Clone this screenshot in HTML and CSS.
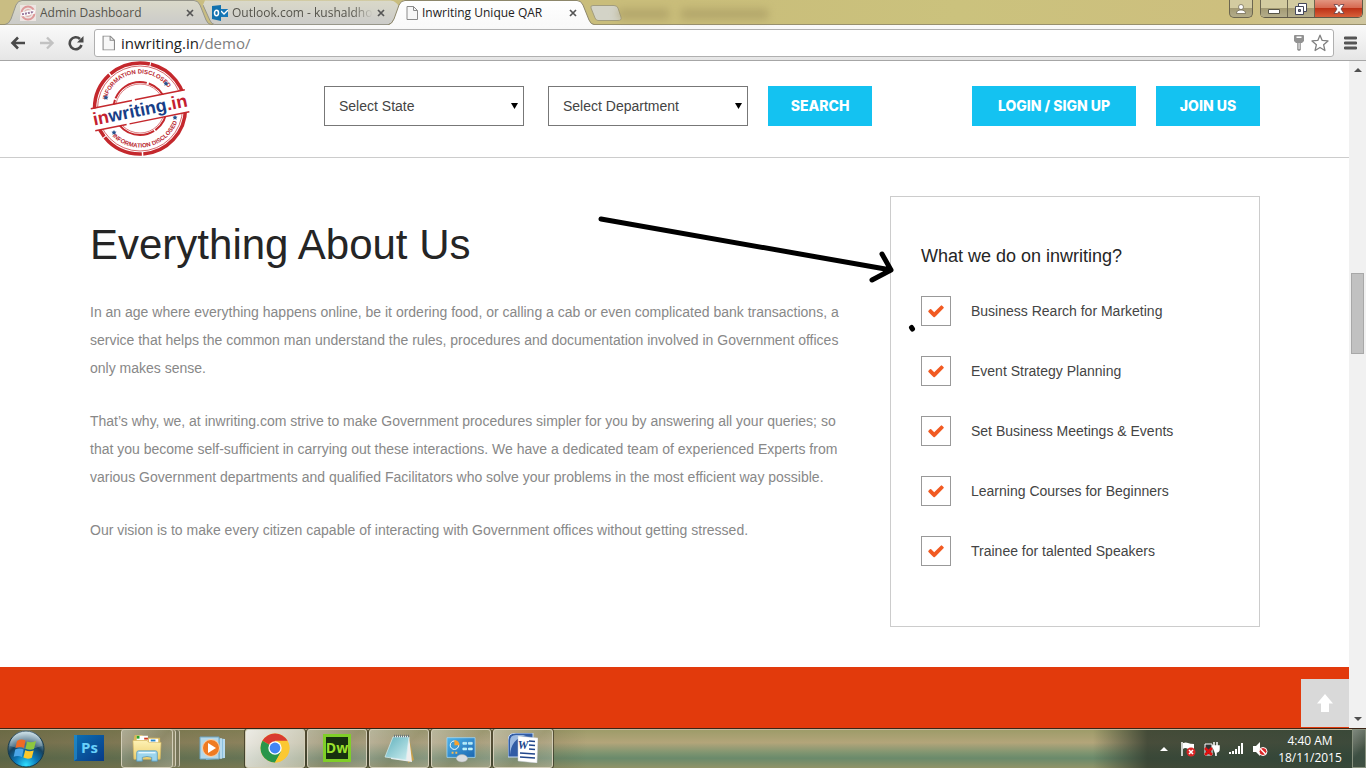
FILE: index.html
```html
<!DOCTYPE html>
<html lang="en">
<head>
<meta charset="utf-8">
<title>Inwriting Unique QAR</title>
<link rel="stylesheet" href="styles.css">
</head>
<body>
<svg class="defs" aria-hidden="true">
  <defs>
    <linearGradient id="g-tab" x1="0" y1="0" x2="0" y2="1"><stop offset="0" stop-color="#dad9c9"/><stop offset="1" stop-color="#cbcbc9"/></linearGradient>
    <linearGradient id="g-active" x1="0" y1="0" x2="0" y2="1"><stop offset="0" stop-color="#fff"/><stop offset="1" stop-color="#f9f9f9"/></linearGradient>
    <radialGradient id="g-orb" cx=".5" cy=".95" r=".9"><stop offset="0" stop-color="#2ee0ff"/><stop offset=".35" stop-color="#0b78b8"/><stop offset=".65" stop-color="#16425f"/><stop offset="1" stop-color="#b5d0da"/></radialGradient>
    <linearGradient id="g-ps" x1="0" y1="0" x2="1" y2="1"><stop offset="0" stop-color="#0b70b4"/><stop offset="1" stop-color="#073a87"/></linearGradient>
    <linearGradient id="g-folder" x1="0" y1="0" x2="0" y2="1"><stop offset="0" stop-color="#fdf1b4"/><stop offset="1" stop-color="#edcf6d"/></linearGradient>
    <linearGradient id="g-note" x1="0" y1="0" x2="1" y2="1"><stop offset="0" stop-color="#5fb0bc"/><stop offset="1" stop-color="#cdeef0"/></linearGradient>
    <linearGradient id="g-panel" x1="0" y1="0" x2="1" y2="1"><stop offset="0" stop-color="#4fb4ea"/><stop offset="1" stop-color="#1a66b0"/></linearGradient>
    <symbol id="page" viewBox="0 0 12 14"><path d="M1 .5h6.5l4 4v9H1z" fill="#f7f7f7" stroke="#8a8a8a"/><path d="M7.5.5v4h4" fill="none" stroke="#8a8a8a"/></symbol>
    <symbol id="close" viewBox="0 0 8 8"><path d="M1 1l6 6M7 1L1 7" stroke="#555" stroke-width="1.7"/></symbol>
    <symbol id="check" viewBox="0 0 1792 1792"><path fill="#f15a22" d="M1671 566q0 40-28 68l-724 724-136 136q-28 28-68 28t-68-28l-136-136-362-362q-28-28-28-68t28-68l136-136q28-28 68-28t68 28l294 295 656-657q28-28 68-28t68 28l136 136q28 28 28 68z"/></symbol>
  </defs>
</svg>

<div class="tabstrip">
  <div class="tab tab-first">
    <svg class="tab-shape" viewBox="0 0 206 25" preserveAspectRatio="none"><path d="M0 24.500Q4 24 6 19L11 5Q13 .5 17 .5H189Q193 .5 195 5L201 20Q203 24.500 206 24.500" fill="url(#g-tab)" stroke="#96958a"/></svg>
    <svg class="tab-icon" viewBox="0 0 16 16"><path d="M0 0h16v16H0z" fill="#ece5e2"/><circle cx="8" cy="8" r="6.500" fill="none" stroke="#d99" stroke-width="2"/><circle cx="8" cy="8" r="3.500" fill="none" stroke="#daa"/><path d="M1 9.500l14-3" stroke="#fff" stroke-width="4"/><path d="M2 9.300l12-2.500" stroke="#98779b" stroke-width="2" stroke-dasharray="2 1"/></svg>
    <span class="tab-title">Admin Dashboard</span>
    <button class="tab-close" aria-label="Close tab"><svg viewBox="0 0 8 8"><use href="#close"/></svg></button>
  </div>
  <div class="tab tab-second">
    <svg class="tab-shape" viewBox="0 0 206 25" preserveAspectRatio="none"><path d="M0 5L7 20Q9 24.500 12 24.500H192Q196 24 198 19L203 6L200 3Q198 .5 194 .5H2Z" fill="url(#g-tab)"/><path d="M0 5L7 20Q9 24.500 12 24.500H192Q196 24 198 19" fill="none" stroke="#96958a"/></svg>
    <svg class="tab-icon" viewBox="0 0 16 16"><path d="M8 4h8v8H8z" fill="#1677b7"/><path d="M9 6l3 3 4-4" fill="none" stroke="#fff" stroke-width="1.300"/><path d="M0 1l9-1v16l-9-2z" fill="#1272ae"/><ellipse cx="4.500" cy="8" rx="2" ry="2.700" fill="none" stroke="#fff" stroke-width="1.500"/></svg>
    <span class="tab-title tab-fade">Outlook.com - kushaldhol</span>
    <button class="tab-close" aria-label="Close tab"><svg viewBox="0 0 8 8"><use href="#close"/></svg></button>
  </div>
  <div class="tab tab-active">
    <svg class="tab-shape" viewBox="0 0 206 25" preserveAspectRatio="none"><path d="M0 25Q4 24 6 19L11 5Q13 .5 17 .5H189Q193 .5 195 5L201 20Q203 24.500 206 24.500V25Z" fill="url(#g-active)"/><path d="M0 25Q4 24 6 19L11 5Q13 .5 17 .5H189Q193 .5 195 5L201 20Q203 24.500 206 24.500" fill="none" stroke="#8d876b"/></svg>
    <svg class="tab-icon tab-page" viewBox="0 0 12 14"><use href="#page"/></svg>
    <span class="tab-title">Inwriting Unique QAR</span>
    <button class="tab-close" aria-label="Close tab"><svg viewBox="0 0 8 8"><use href="#close"/></svg></button>
  </div>
  <button class="new-tab" aria-label="New tab"><svg viewBox="0 0 32 16"><path d="M3 .5H24Q27 .5 28 3L31 12Q32 15.500 28 15.500H8Q6 15.500 5 13L1 3Q0 .5 3 .5Z" fill="#d3d3c7" stroke="#a29d7e"/></svg></button>
  <div class="background-title"></div>
  <div class="window-controls">
    <button class="wc wc-user" aria-label="User"><svg viewBox="0 0 12 12"><circle cx="6" cy="4" r="2.500" fill="#fff" stroke="#665f47" stroke-width=".7"/><path d="M1.500 10.500Q1.500 7 6 7t4.500 3.500z" fill="#fff" stroke="#665f47" stroke-width=".7"/></svg></button>
    <div class="wc-group">
      <button class="wc" aria-label="Minimize"><svg viewBox="0 0 12 12"><path d="M.5 6.500h11v4H.5z" fill="#fff" stroke="#565448"/></svg></button>
      <button class="wc" aria-label="Restore"><svg viewBox="0 0 12 12"><path d="M3.500.5h8v8h-8z" fill="#fff" stroke="#44475a"/><path d="M.5 3.500h8v8h-8z" fill="#fff" stroke="#44475a"/><path d="M3.500 6.500h2v2h-2z" fill="#888" stroke="#44475a"/></svg></button>
      <button class="wc wc-close" aria-label="Close"><svg viewBox="0 0 12 12"><path d="M1 1.500h3.500L6 3.500l1.500-2H11L8 6l3 4.500H7.500L6 8.500l-1.500 2H1L4 6z" fill="#fff" stroke="#663c45" stroke-width=".8"/></svg></button>
    </div>
  </div>
</div>

<div class="toolbar">
  <button class="nav" aria-label="Back"><svg viewBox="0 0 16 16"><path d="M15 8H3M8 2.500L2.500 8 8 13.500" fill="none" stroke="#4a4a4a" stroke-width="2.600"/></svg></button>
  <button class="nav" aria-label="Forward"><svg viewBox="0 0 16 16"><path d="M1 8h12M8 2.500L13.500 8 8 13.500" fill="none" stroke="#c2c2c2" stroke-width="2.400"/></svg></button>
  <button class="nav" aria-label="Reload"><svg viewBox="0 0 16 16"><path d="M13.500 10A6 6 0 1 1 12 4" fill="none" stroke="#4a4a4a" stroke-width="2.600"/><path d="M15.500 1v6.500H9z" fill="#4a4a4a"/></svg></button>
  <div class="omnibox">
    <svg class="url-page" viewBox="0 0 12 14"><use href="#page"/></svg>
    <div class="url"><span class="host">inwriting.in</span>/demo/</div>
    <svg class="key" viewBox="0 0 10 16"><path d="M1 0h8q1 0 1 1v5l-2 2H6.800v7L5 16l-1.800-1V8H2L0 6V1q0-1 1-1z" fill="#929292"/><path d="M2.500 1.500h5v1.600h-5zM4.600 8h.9v6h-.9z" fill="#fff"/></svg>
    <svg class="star" viewBox="0 0 18 18"><path d="M9 1.200l2.200 5.200 5.800.5-4.400 3.800 1.300 5.800L9 13.500l-4.900 3 1.300-5.800L1 6.900l5.800-.5z" fill="#fff" stroke="#808080" stroke-width="1.300" stroke-linejoin="round"/></svg>
  </div>
  <button class="nav menu" aria-label="Menu"><svg viewBox="0 0 13 14"><path d="M1 2h11M1 7h11M1 12h11" stroke="#555" stroke-width="2.800" stroke-linecap="round"/></svg></button>
</div>

<div class="viewport">
  <div class="page">
    <header class="site-header">
      <a class="logo" href="#" aria-label="inwriting.in">
        <svg viewBox="0 0 100 96">
          <defs><path id="arc-top" d="M15.500 47a34.500 34.500 0 0 1 69 0"/><path id="arc-bottom" d="M10.500 47a39.500 39.500 0 0 0 79 0"/></defs>
          <g fill="none" stroke="#c4282d">
            <circle cx="50" cy="47.500" r="45.500" stroke-width="3.500" stroke-dasharray="68 1.500 42 1"/>
            <circle cx="50" cy="47.500" r="42.500" stroke-width=".7"/>
            <circle cx="50" cy="47.500" r="26.500" stroke-width="2" stroke-dasharray="25 1.500 38 2"/>
            <circle cx="50" cy="47.500" r="24.500" stroke-width=".6"/>
          </g>
          <g transform="rotate(-11.500 50 49)">
            <path d="M0 38.500h100v22H0z" fill="#fff"/>
            <path d="M2 38h42m3 0h51M2 60.500h32m3 0h61" stroke="#c4282d" stroke-width="1.500"/>
            <text class="logo-name" x="50" y="55" text-anchor="middle" fill="#c4202f">in<tspan fill="#173e87">writing</tspan>.in</text>
          </g>
          <g class="logo-ring" fill="#b8262e">
            <text text-anchor="middle"><textPath href="#arc-top" startOffset="44%">INFORMATION DISCLOSED</textPath></text>
            <text text-anchor="middle"><textPath href="#arc-bottom" startOffset="57%">INFORMATION DISCLOSED</textPath></text>
          </g>
          <g fill="#24528f"><path id="st" d="M16 34l.8 1.600 1.700.2-1.200 1.300.3 1.700-1.600-.8-1.600.8.3-1.700-1.200-1.300 1.700-.2z"/><use href="#st" x="60" y="-14"/><use href="#st" x="8" y="35"/><use href="#st" x="69" y="20"/></g>
        </svg>
      </a>
      <form class="search">
        <label class="select"><select aria-label="State"><option>Select State</option></select></label>
        <label class="select"><select aria-label="Department"><option>Select Department</option></select></label>
        <button class="btn" type="button">SEARCH</button>
      </form>
      <nav class="account">
        <a class="btn btn-wide" href="#">LOGIN / SIGN UP</a>
        <a class="btn" href="#">JOIN US</a>
      </nav>
    </header>

    <main class="about">
      <section class="about-text">
        <h1>Everything About Us</h1>
        <p>In an age where everything happens online, be it ordering food, or calling a cab or even complicated bank transactions, a service that helps the common man understand the rules, procedures and documentation involved in Government offices only makes sense.</p>
        <p>That’s why, we, at inwriting.com strive to make Government procedures simpler for you by answering all your queries; so that you become self-sufficient in carrying out these interactions. We have a dedicated team of experienced Experts from various Government departments and qualified Facilitators who solve your problems in the most efficient way possible.</p>
        <p>Our vision is to make every citizen capable of interacting with Government offices without getting stressed.</p>
      </section>
      <aside class="card">
        <h2>What we do on inwriting?</h2>
        <ul>
          <li><span class="tick"><svg viewBox="0 0 1792 1792"><use href="#check"/></svg></span>Business Rearch for Marketing</li>
          <li><span class="tick"><svg viewBox="0 0 1792 1792"><use href="#check"/></svg></span>Event Strategy Planning</li>
          <li><span class="tick"><svg viewBox="0 0 1792 1792"><use href="#check"/></svg></span>Set Business Meetings &amp; Events</li>
          <li><span class="tick"><svg viewBox="0 0 1792 1792"><use href="#check"/></svg></span>Learning Courses for Beginners</li>
          <li><span class="tick"><svg viewBox="0 0 1792 1792"><use href="#check"/></svg></span>Trainee for talented Speakers</li>
        </ul>
        <svg class="pointer" viewBox="0 0 330 130" aria-hidden="true"><path d="M11 13L301 64M292 48l9 16-19 10" fill="none" stroke="#000" stroke-width="5" stroke-linecap="round" stroke-linejoin="round"/><path d="M321.500 121.500l1 1.500" stroke="#000" stroke-width="5" stroke-linecap="round"/></svg>
      </aside>
    </main>

    <section class="band">
      <button class="to-top" aria-label="Back to top"><svg viewBox="0 0 16 18"><path d="M8 0l8 9.500h-4V18H4V9.500H0z" fill="#fff"/></svg></button>
    </section>
  </div>
  <div class="scrollbar">
    <svg viewBox="0 0 8 4"><path d="M4 0l4 4H0z" fill="#505050"/></svg>
    <div class="track"><div class="thumb"></div></div>
    <svg viewBox="0 0 8 4"><path d="M0 0h8L4 4z" fill="#505050"/></svg>
  </div>
</div>

<footer class="taskbar">
  <button class="start" aria-label="Start"><svg viewBox="0 0 38 38"><circle cx="19" cy="19" r="18" fill="url(#g-orb)" stroke="#14384c"/><path d="M3 16a16 16 0 0 1 32 0Q19 22 3 16z" fill="#fff" opacity=".22"/><path d="M10 11q4-2.500 8.500-.5l-1.500 7.500q-4-2-8.500 0z" fill="#ef6a25"/><path d="M20 11.500q4 1.700 9-.5l-2 8q-4 1.700-8.500-.3z" fill="#8dc63f"/><path d="M8.200 19.500q4-2 8.500 0l-1.800 7.500q-4-2-8.200-.2z" fill="#4aa6e8"/><path d="M18.200 20.200q4 2 8.500.3l-1.900 7.300q-4 2-8.400-.2z" fill="#fcc92c"/></svg></button>
  <div class="apps">
    <button class="app" aria-label="Photoshop"><svg viewBox="0 0 30 30"><path d="M0 2h30v26H0z" fill="url(#g-ps)"/><path d="M0 2h3v24l-3 2z" fill="#2b95cf" opacity=".6"/><text x="15.500" y="20" class="glyph" fill="#69d0fb">Ps</text></svg></button>
    <button class="app open stacked" aria-label="Explorer"><svg viewBox="0 0 32 30"><path d="M2 4l1-3h8l1 3h18v22H2z" fill="#d9b85b"/><path d="M5 2h12v5H5zM18 5h10v5H18z" fill="#fff"/><path d="M5 2h3v3H5z" fill="#29a329"/><path d="M13 4h4v2h-4z" fill="#d03a20"/><path d="M20 6h5v2h-5z" fill="#2685cc"/><path d="M1 7h15l2 2h13l-1 18H2z" fill="url(#g-folder)" stroke="#d6b962" stroke-width=".7"/><path d="M5 29V20q0-2 2-2h18q2 0 2 2v9h-6v-4q-5-2-10 0v4z" fill="#9cd5ee" stroke="#5195bc" stroke-width=".8"/><path d="M7 20h18" stroke="#e4f8ff" stroke-width="1.500"/></svg></button>
    <button class="app" aria-label="Media player"><svg viewBox="0 0 30 30"><path d="M8 4l19 2v19l-19 2z" fill="#8ec0dc"/><path d="M23 5v21M26 6v19" stroke="#dff3ff"/><path d="M2 4h19v22H2z" fill="#b4d8e9" stroke="#6fa5c2"/><circle cx="13" cy="15" r="8.500" fill="#ef7b22" stroke="#fbd3aa"/><path d="M10 10v10l8-5z" fill="#fff"/></svg></button>
    <button class="app open current" aria-label="Chrome"><svg viewBox="0 0 30 30"><circle cx="15" cy="15" r="14.500" fill="#fbc831"/><path d="M15 15L2.450 7.750A14.500 14.500 0 0 1 27.550 7.750H15z" fill="#d93b31"/><path d="M15 15L2.450 7.750A14.500 14.500 0 0 0 15 29.500L21.300 18.600z" fill="#29964b"/><path d="M15 8.400h12.800A14.500 14.500 0 0 1 15 29.500l6-11z" fill="#fbc831"/><circle cx="15" cy="15" r="6.700" fill="#fff"/><circle cx="15" cy="15" r="5.400" fill="#4285f4"/></svg></button>
    <button class="app open" aria-label="Dreamweaver"><svg viewBox="0 0 30 30"><path d="M1 1h28v28H1z" fill="#80cf28"/><path d="M4 4h22v22H4z" fill="#18300f"/><text x="15" y="20" class="glyph glyph-dw" fill="#9be22d">Dw</text></svg></button>
    <button class="app open" aria-label="Notepad"><svg viewBox="0 0 30 30"><path d="M25 5l5 22-6 3z" fill="#c7a04b"/><path d="M10 3h15l3 26-21-3z" fill="#eee"/><path d="M9 4h16l-3 23-21-3z" fill="url(#g-note)" stroke="#d7eef0" stroke-width=".7"/><path d="M10 3h16" stroke="#6a787c" stroke-width="2.500" stroke-dasharray="1 1"/></svg></button>
    <button class="app open" aria-label="Control panel"><svg viewBox="0 0 32 30"><path d="M1 4h30v21H1z" fill="url(#g-panel)" stroke="#a5dbf8" stroke-width=".8"/><circle cx="9" cy="12" r="4.500" fill="#3c9bd6" stroke="#fff"/><path d="M9 12V6.500a5.500 5.500 0 0 1 5.500 5.500z" fill="#f8a12d"/><path d="M18 9h4v2h-4zM24 9h4v2h-4zM18 15h4v2h-4zM24 15h4v2h-4z" fill="#8ff0ff" stroke="#fff" stroke-width=".6"/><path d="M6 20h2M10 20h2" stroke="#f9bb54" stroke-width="2"/><ellipse cx="17" cy="26" rx="6" ry="4" fill="#d9dcdf" stroke="#aaa" stroke-width=".5"/></svg></button>
    <button class="app open" aria-label="Word"><svg viewBox="0 0 30 30"><path d="M0 24V7Q0 0 8 0h17v24z" fill="#315ca5" stroke="#c5d9f3"/><path d="M2 22Q3 6 18 2H8Q2 2 2 8z" fill="#9bb9e1"/><path d="M10 3l20 2-1 25-19-2z" fill="#fff" stroke="#c2c8d2" stroke-width=".5"/><text x="15" y="16" class="glyph glyph-word" fill="#21468b">W</text><path d="M21 8l6 .5M21 12l6 .5M21 16l6 .5M12 20l15 1M12 24l15 1" stroke="#21468b" stroke-width="1.500"/></svg></button>
  </div>
  <div class="tray">
    <svg viewBox="0 0 16 16"><path d="M4 10l4-4 4 4z" fill="#fff"/></svg>
    <svg viewBox="0 0 16 16"><path d="M2 1v14" stroke="#fff" stroke-width="1.500"/><path d="M3 2q3-1 5 0t6 1v6q-3 1-6-1T3 8z" fill="#fff"/><circle cx="11" cy="11" r="4.500" fill="#d92525"/><path d="M9 9l4 4m0-4l-4 4" stroke="#fff" stroke-width="1.500"/></svg>
    <svg viewBox="0 0 16 16"><path d="M1 3h7v11H1z" fill="#333" stroke="#fff"/><path d="M10 1v4M13 1v4M8 5h7v3q0 3-3 3v4" fill="#fff" stroke="#fff" stroke-width="1.500"/><path d="M1 7l7 7m0-7l-7 7" stroke="#e01010" stroke-width="2.500"/></svg>
    <svg viewBox="0 0 16 16"><path d="M1 11h2v2H1zM4 10h2v3H4zM7 8h2v5H7zM10 5h2v8h-2zM13 2h2v11h-2z" fill="#fff"/></svg>
    <svg viewBox="0 0 16 16"><path d="M1 5h3l4-4v14l-4-4H1z" fill="#fff"/><circle cx="11" cy="10.500" r="4" fill="#d92525" stroke="#fff"/><path d="M8.500 8l5 5" stroke="#fff" stroke-width="1.500"/></svg>
  </div>
  <div class="clock"><time>4:40 AM</time><time>18/11/2015</time></div>
  <button class="show-desktop" aria-label="Show desktop"></button>
</footer>
</body>
</html>
```
FILE: styles.css
```css
* { box-sizing: border-box; }
body {
  margin: 0;
  height: 100vh;
  display: flex;
  flex-direction: column;
  overflow: hidden;
  background: #fff;
  font-family: "Liberation Sans", Arial, sans-serif;
  font-size: 14px;
}
button { margin: 0; padding: 0; border: 0; background: none; font: inherit; }
svg { display: block; }
.defs { position: absolute; width: 0; height: 0; }

/* Tab strip */
.tabstrip {
  flex: none;
  height: 25px;
  display: flex;
  align-items: flex-start;
  padding-left: 5px;
  font-family: "Open Sans", "Noto Sans", sans-serif;
  background: linear-gradient(90deg, #c9bd83 0, #c9bd7a 50%, #cbc27d 70%, #cdbf7e 90%, #cfc6a0 100%);
  border-bottom: 1px solid #98906d;
}
.tab {
  position: relative;
  flex: none;
  width: 206px;
  height: 25px;
  padding-right: 17px;
  display: flex;
  align-items: center;
  gap: 4px;
}
.tab-first { padding-left: 15px; margin-right: -8px; }
.tab-second { width: 199px; padding-left: 9px; margin-right: -14px; }
.tab-active { z-index: 1; padding-left: 18px; margin-right: -4px; }
.tab-shape { position: absolute; inset: 0; width: 100%; height: 100%; }
.tab-icon { position: relative; flex: none; width: 16px; height: 16px; }
.tab-page { width: 12px; height: 14px; }
.tab-title {
  position: relative;
  flex: 1;
  min-width: 0;
  overflow: hidden;
  white-space: nowrap;
  font-size: 12px;
  line-height: 24px;
  color: #55544c;
}
.tab-active .tab-title { color: #222; }
.tab-fade { -webkit-mask-image: linear-gradient(90deg, #000 85%, transparent); mask-image: linear-gradient(90deg, #000 85%, transparent); }
.tab-close { position: relative; flex: none; width: 8px; height: 8px; }
.new-tab { width: 32px; height: 16px; margin-top: 5px; }
.background-title {
  width: 150px;
  height: 10px;
  margin: 9px 0 0 -4px;
  background: linear-gradient(90deg, #a3955f 0 34%, transparent 34% 42%, #a3955f 42%);
  filter: blur(4px);
  opacity: .6;
}
.window-controls { display: flex; gap: 7px; margin-left: auto; padding-right: 3px; }
.wc {
  width: 27px;
  height: 17px;
  display: grid;
  place-items: center;
  background: linear-gradient(#d3cba0 50%, #a49b74 50%, #b3ac8a);
  border-left: 1px solid #6c6650;
}
.wc svg { width: 12px; height: 12px; }
.wc-user { width: 24px; height: 18px; border: 1px solid #6c6650; border-top: 0; border-radius: 0 0 5px 5px; }
.wc-group { display: flex; border: 1px solid #5f5948; border-width: 0 1px 1px 0; border-radius: 0 0 5px 5px; overflow: hidden; }
.wc-close { width: 48px; background: linear-gradient(#e29580, #d6654d 50%, #bd3217 50%, #d8603a); }

/* Toolbar */
.toolbar {
  flex: none;
  height: 36px;
  display: flex;
  align-items: center;
  gap: 10px;
  padding: 0 9px 0 10px;
  background: linear-gradient(#fafafa, #e6e6e6);
  border-bottom: 1px solid #a6a6a6;
}
.nav { flex: none; width: 16px; height: 16px; }
.nav + .nav { margin-left: 3px; }
.menu { width: 13px; height: 14px; }
.omnibox {
  flex: 1;
  height: 28px;
  padding: 0 4px 0 7px;
  display: flex;
  align-items: center;
  background: #fff;
  border: 1px solid #b0b0b0;
  border-radius: 3px;
}
.url-page { width: 13px; height: 16px; }
.url {
  flex: 1;
  margin-left: 6px;
  font: 15px/24px "Open Sans", "Noto Sans", sans-serif;
  color: #808080;
}
.host { color: #222; }
.key { width: 10px; height: 16px; margin-right: 7px; }
.star { width: 18px; height: 18px; }

/* Page */
.viewport { flex: 1; min-height: 0; display: flex; }
.page { flex: 1; min-width: 0; display: flex; flex-direction: column; }
.site-header {
  display: flex;
  align-items: flex-start;
  padding: 0 89px 0 90px;
  border-bottom: 1px solid #ccc;
}
.logo svg { width: 100px; height: 96px; }
.logo-name { font: bold 18px "Liberation Sans", Arial, sans-serif; }
.logo-ring { font: bold 6px "Liberation Sans Narrow", "Liberation Sans", Arial, sans-serif; }
.search { display: flex; gap: 24px; margin: 25px 0 0 134px; }
.search .btn { margin-left: -4px; }
.select { position: relative; }
.select::after {
  content: "";
  position: absolute;
  right: 6px;
  top: 17px;
  width: 7px;
  height: 6px;
  background: #000;
  clip-path: polygon(0 0, 100% 0, 50% 100%);
  pointer-events: none;
}
.select select {
  appearance: none;
  display: block;
  width: 200px;
  height: 40px;
  padding: 0 14px;
  border: 1px solid #777;
  border-radius: 0;
  background: #fff;
  color: #444;
  font: 14px "Liberation Sans", Arial, sans-serif;
}
.account { display: flex; gap: 20px; margin: 25px 0 0 auto; }
.btn {
  display: block;
  min-width: 104px;
  padding: 0 20px;
  background: #14c2f1;
  color: #fff;
  font: 800 14px/40px Inter, "Open Sans", sans-serif;
  text-align: center;
  text-decoration: none;
  white-space: nowrap;
}
.btn-wide { min-width: 164px; }
.about {
  display: grid;
  grid-template-columns: minmax(0, 1fr) 370px;
  gap: 30px;
  padding: 38px 89px 40px 90px;
}
.about-text { padding-top: 25px; }
.about-text h1 { margin: 0 0 29px; font-weight: 400; font-size: 42px; line-height: 48px; color: #252525; }
.about-text p { margin: 0 0 25px; line-height: 28px; color: #888; }
.card { position: relative; padding: 47px 30px 60px; border: 1px solid #ccc; }
.card h2 { margin: 0 0 28px; font-weight: 400; font-size: 18px; line-height: 24px; color: #252525; }
.card ul { margin: 0; padding: 0; list-style: none; display: grid; gap: 30px; }
.card li { display: flex; align-items: center; gap: 20px; color: #444; line-height: 30px; }
.tick { width: 30px; height: 30px; display: grid; place-items: center; border: 1px solid #999; }
.tick svg { width: 18px; height: 18px; }
.pointer { position: absolute; left: -301px; top: 9px; width: 330px; height: 130px; pointer-events: none; }
.band { flex: 1; position: relative; background: #e23a0c; }
.to-top {
  position: absolute;
  right: 0;
  bottom: 1px;
  width: 48px;
  height: 48px;
  display: grid;
  place-items: center;
  background: #d9d9d9;
}
.to-top svg { width: 16px; height: 18px; }
.scrollbar {
  flex: none;
  width: 17px;
  padding: 7px 0;
  display: flex;
  flex-direction: column;
  align-items: center;
  background: #f1f1f1;
}
.scrollbar svg { width: 8px; height: 4px; }
.track { flex: 1; display: flex; flex-direction: column; padding-top: 201px; }
.thumb { width: 13px; height: 81px; background: #c1c1c1; border: 1px solid #a8a8a8; }

/* Taskbar */
.taskbar {
  flex: none;
  height: 40px;
  display: flex;
  align-items: center;
  padding-left: 7px;
  border-top: 1px solid #3b2516;
  box-shadow: inset 0 1px #c5b99f;
  background:
    linear-gradient(90deg, rgba(80, 80, 50, .65) 0, rgba(96, 91, 60, .5) 16%, rgba(90, 80, 55, .2) 40%, transparent 43%, transparent 80%, rgba(45, 55, 43, .8) 84%, rgba(40, 58, 48, .85)),
    linear-gradient(#9c9b68 0, #b3a57a 35%, #7d9470 62%, #6a8a6b 75%, #919468 100%);
}
.start { width: 38px; height: 38px; }
.start svg { width: 38px; height: 38px; }
.apps { display: flex; gap: 2px; margin-left: 14px; align-self: stretch; }
.app { width: 60px; display: grid; place-items: center; padding-bottom: 2px; border: 1px solid transparent; }
.app svg { width: 30px; height: 30px; }
.open {
  border-color: #d3ceb8;
  border-radius: 3px;
  background: linear-gradient(135deg, rgba(255, 255, 255, .4), rgba(255, 255, 255, .12) 55%, rgba(255, 255, 255, .25));
  box-shadow: 0 0 0 1px rgba(40, 35, 20, .6);
}
.current { background: linear-gradient(135deg, rgba(255, 255, 255, .85), rgba(225, 225, 210, .6)); }
.stacked { width: 52px; margin-right: 8px; box-shadow: 3px 0 0 -1px #8b8768, 4px 0 0 -1px #d3ceb8, 7px 0 0 -1px #77765a, 8px 0 0 -1px #c3bea8; }
.glyph { font: bold 15px "Open Sans", sans-serif; text-anchor: middle; }
.glyph-dw { font-size: 14px; }
.glyph-word { font: italic bold 12px "Liberation Serif", serif; }
.tray { display: flex; gap: 8px; margin-left: auto; }
.tray svg { width: 16px; height: 16px; }
.clock {
  width: 84px;
  display: flex;
  flex-direction: column;
  align-items: center;
  color: #fff;
  font: 12px/17px "Open Sans", "Noto Sans", sans-serif;
}
.show-desktop {
  width: 14px;
  align-self: stretch;
  border: 1px solid #87917f;
  background: linear-gradient(135deg, rgba(255, 255, 255, .35), rgba(255, 255, 255, .05) 60%);
}
```
